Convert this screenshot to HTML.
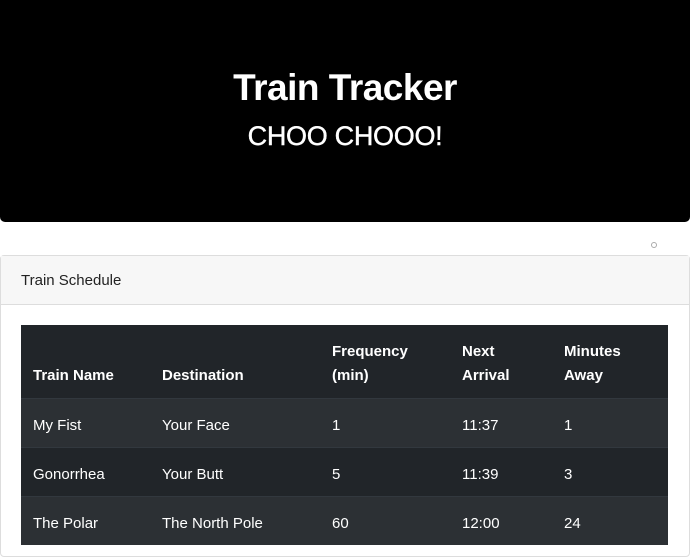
<!DOCTYPE html>
<html><head><style>
body{margin:0;background:#fff;font-family:"Liberation Sans",sans-serif;width:692px;height:526px;overflow:hidden;position:relative}
.jumbo{position:absolute;left:0;top:0;width:690px;height:222px;background:#000;border-radius:0 0 5px 5px;color:#fff;text-align:center}
.jumbo h1{margin:0;position:absolute;top:67px;width:100%;font-size:37px;font-weight:bold;letter-spacing:-0.5px}
.jumbo h2{margin:0;position:absolute;top:121px;width:100%;font-size:27px;font-weight:normal;letter-spacing:-0.3px;-webkit-text-stroke:0.4px #fff}
.dot{position:absolute;left:651px;top:242px;width:4px;height:4px;border:1px solid #aaa;border-radius:50%}
.card{position:absolute;left:0;top:255px;width:688px;height:300px;border:1px solid #ddd;border-radius:4px}
.hdr{height:48px;background:#f7f7f7;border-bottom:1px solid #ddd;font-size:15px;color:#222;line-height:50px;padding-left:20px}
table{position:absolute;left:20px;top:69px;width:647px;border-collapse:collapse;color:#fff;font-size:15px;table-layout:fixed}
th,td{text-align:left;padding:0 0 0 12px;vertical-align:middle}
th{font-weight:bold;height:73px;background:#212529;vertical-align:bottom;padding-bottom:10px;line-height:24px;box-sizing:border-box}
td{height:49px;border-top:1px solid #32383e;box-sizing:border-box;padding-top:5px}
tr.o td{background:#2c3034}tr.e td{background:#212529}
</style></head><body>
<div class="jumbo"><h1>Train Tracker</h1><h2>CHOO CHOOO!</h2></div>
<div class="dot"></div>
<div class="card"><div class="hdr">Train Schedule</div>
<table>
<colgroup><col style="width:129px"><col style="width:170px"><col style="width:130px"><col style="width:102px"><col style="width:116px"></colgroup>
<tr><th>Train Name</th><th>Destination</th><th>Frequency<br>(min)</th><th>Next<br>Arrival</th><th>Minutes<br>Away</th></tr>
<tr class="o"><td>My Fist</td><td>Your Face</td><td>1</td><td>11:37</td><td>1</td></tr>
<tr class="e"><td>Gonorrhea</td><td>Your Butt</td><td>5</td><td>11:39</td><td>3</td></tr>
<tr class="o"><td>The Polar</td><td>The North Pole</td><td>60</td><td>12:00</td><td>24</td></tr>
</table></div>
</body></html>
